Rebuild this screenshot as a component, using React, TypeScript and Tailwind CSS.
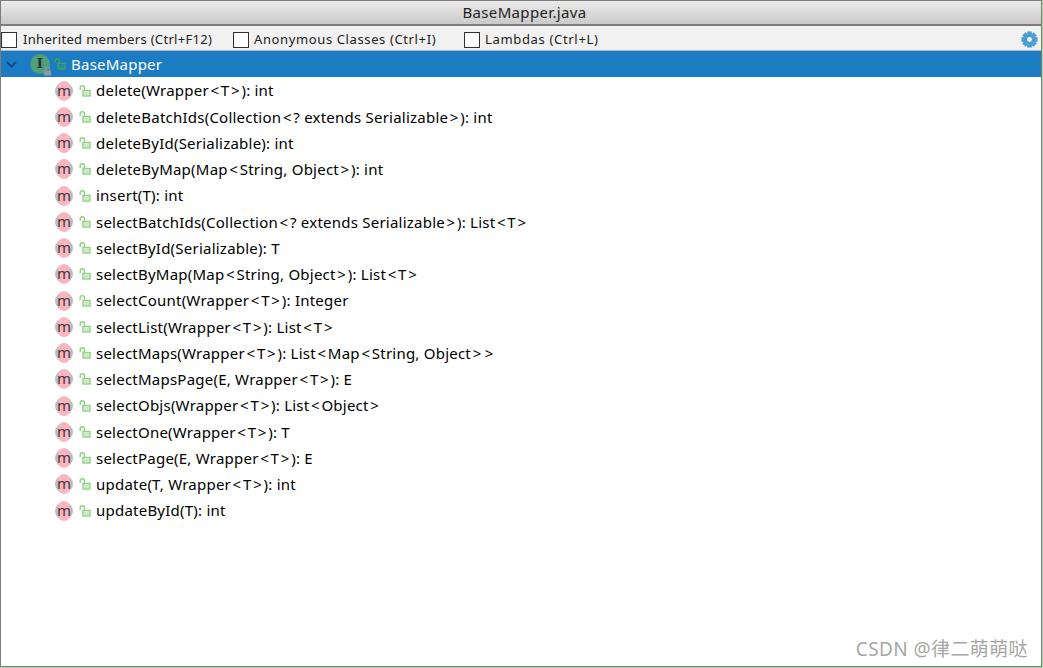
import React from 'react';

const methods = [
  'delete(Wrapper<T>): int',
  'deleteBatchIds(Collection<? extends Serializable>): int',
  'deleteById(Serializable): int',
  'deleteByMap(Map<String, Object>): int',
  'insert(T): int',
  'selectBatchIds(Collection<? extends Serializable>): List<T>',
  'selectById(Serializable): T',
  'selectByMap(Map<String, Object>): List<T>',
  'selectCount(Wrapper<T>): Integer',
  'selectList(Wrapper<T>): List<T>',
  'selectMaps(Wrapper<T>): List<Map<String, Object>>',
  'selectMapsPage(E, Wrapper<T>): E',
  'selectObjs(Wrapper<T>): List<Object>',
  'selectOne(Wrapper<T>): T',
  'selectPage(E, Wrapper<T>): E',
  'update(T, Wrapper<T>): int',
  'updateById(T): int',
];

const filters = [
  { label: 'Inherited members (Ctrl+F12)', className: 'w-[232px] gap-[6px] tracking-[0.32px]' },
  { label: 'Anonymous Classes (Ctrl+I)', className: 'w-[231px] gap-[5px] tracking-[0.62px]' },
  { label: 'Lambdas (Ctrl+L)', className: 'w-[200px] gap-[5px] tracking-[0.67px]' },
];

// open padlock next to each member
const OpenLock: React.FC<{ color: string }> = ({ color }) => (
  <svg width="12" height="12" viewBox="0 0 12 12" className="shrink-0">
    <path d="M1.2 5V2.8a2.1 2.1 0 0 1 4.2 0V5" fill="none" stroke={color} strokeWidth="1.4" />
    <rect x="4" y="5.5" width="7" height="5.5" fill="none" stroke={color} strokeWidth="1.4" />
    <rect x="5" y="6.5" width="5" height="3.5" fill={color} opacity="0.45" />
  </svg>
);

const MethodIcon: React.FC = () => (
  <span className="relative h-[18px] w-[18px] shrink-0 rounded-full bg-[#bdbdc2]">
    <span className="absolute left-[3px] top-[-1px] h-[20px] w-[12px] rounded-full bg-[#f9b6c1]" />
    <span className="absolute left-[2px] top-[1px] h-[16px] w-[14px] text-center text-[15px] leading-[15px] tracking-normal text-[#453537]">
      m
    </span>
  </span>
);

const GearIcon: React.FC = () => (
  <svg width="17" height="17" viewBox="0 0 18 18">
    <g fill="#4b9fd0">
      <rect x="6.5" y="0.5" width="5" height="17" />
      <rect x="0.5" y="6.5" width="17" height="5" />
      <rect x="6.5" y="0.5" width="5" height="17" transform="rotate(45 9 9)" />
      <rect x="6.5" y="0.5" width="5" height="17" transform="rotate(-45 9 9)" />
      <circle cx="9" cy="9" r="6" />
    </g>
    <circle cx="9" cy="9" r="2.6" fill="#f2f2f2" />
  </svg>
);

// the angle brackets sit wider apart in the reference font
const Signature: React.FC<{ text: string }> = ({ text }) => (
  <span className="ml-[5px] whitespace-pre">
    {text.split(/([<>])/).map((part, i) =>
      part === '<' || part === '>' ? (
        <span key={i} className="mx-[1.6px]">
          {part}
        </span>
      ) : (
        part
      ),
    )}
  </span>
);

export default function App() {
  return (
    <div className="relative h-[668px] w-[1043px] overflow-hidden bg-[#a5dca5] font-['Noto_Sans','Noto_Sans_CJK_SC',sans-serif] text-[15px] tracking-[0.23px] text-black">
      <div className="flex h-[667px] w-[1042px] flex-col border border-[#7c7c7c] bg-white">
        {/* Title bar */}
        <div className="flex h-[25px] shrink-0 items-center justify-center border-b-2 border-[#7c7c7c] bg-gradient-to-b from-[#ececec] to-[#c9c9c9] pl-[7px] text-[15px] tracking-[0.35px] text-[#222]">
          BaseMapper.java
        </div>

        {/* Filter toolbar */}
        <div className="flex h-[25px] shrink-0 items-center border-b border-[#b4b4b4] bg-[#f1f1f1] pt-[3px] text-[13px] text-[#222]">
          {filters.map((f) => (
            <label key={f.label} className={`flex items-center ${f.className}`}>
              <span className="h-[16px] w-[16px] shrink-0 border border-[#333] bg-white" />
              {f.label}
            </label>
          ))}
          <span className="ml-auto mr-[3px] flex">
            <GearIcon />
          </span>
        </div>

        {/* Structure tree */}
        <div className="flex h-[26.4px] shrink-0 items-center bg-[#1b7cc4] text-white">
          <svg width="11" height="7" viewBox="0 0 11 7" className="ml-[5px] shrink-0">
            <path d="M1 1l4.5 4.5L10 1" fill="none" stroke="#0f4c80" strokeWidth="2" />
          </svg>
          <span className="relative ml-[13px] flex h-[20px] w-[20px] shrink-0 items-center justify-center rounded-full bg-[#4f9e7c] font-['DejaVu_Serif',serif] text-[13px] font-bold text-[#20332c]">
            I
            <svg width="9" height="10" viewBox="0 0 9 10" className="absolute -bottom-[2px] -right-[2px]">
              <path d="M2.5 4.5V3a2 2 0 0 1 4 0v1.5" fill="none" stroke="#8a9aa8" strokeWidth="1.2" />
              <rect x="1" y="4.5" width="7" height="5" fill="#8a9aa8" />
            </svg>
          </span>
          <span className="ml-[4px] flex">
            <OpenLock color="#3fa05f" />
          </span>
          <span className="ml-[5px]">BaseMapper</span>
        </div>

        {methods.map((m) => (
          <div key={m} className="flex h-[26.25px] shrink-0 items-center pl-[54px]">
            <MethodIcon />
            <span className="ml-[6px] flex">
              <OpenLock color="#8fcf80" />
            </span>
            <Signature text={m} />
          </div>
        ))}
      </div>

      {/* Watermark */}
      <span className="absolute bottom-[5px] right-[15px] text-[19px] tracking-[0.4px] text-[#a6a6a6]">CSDN @律二萌萌哒</span>
    </div>
  );
}
